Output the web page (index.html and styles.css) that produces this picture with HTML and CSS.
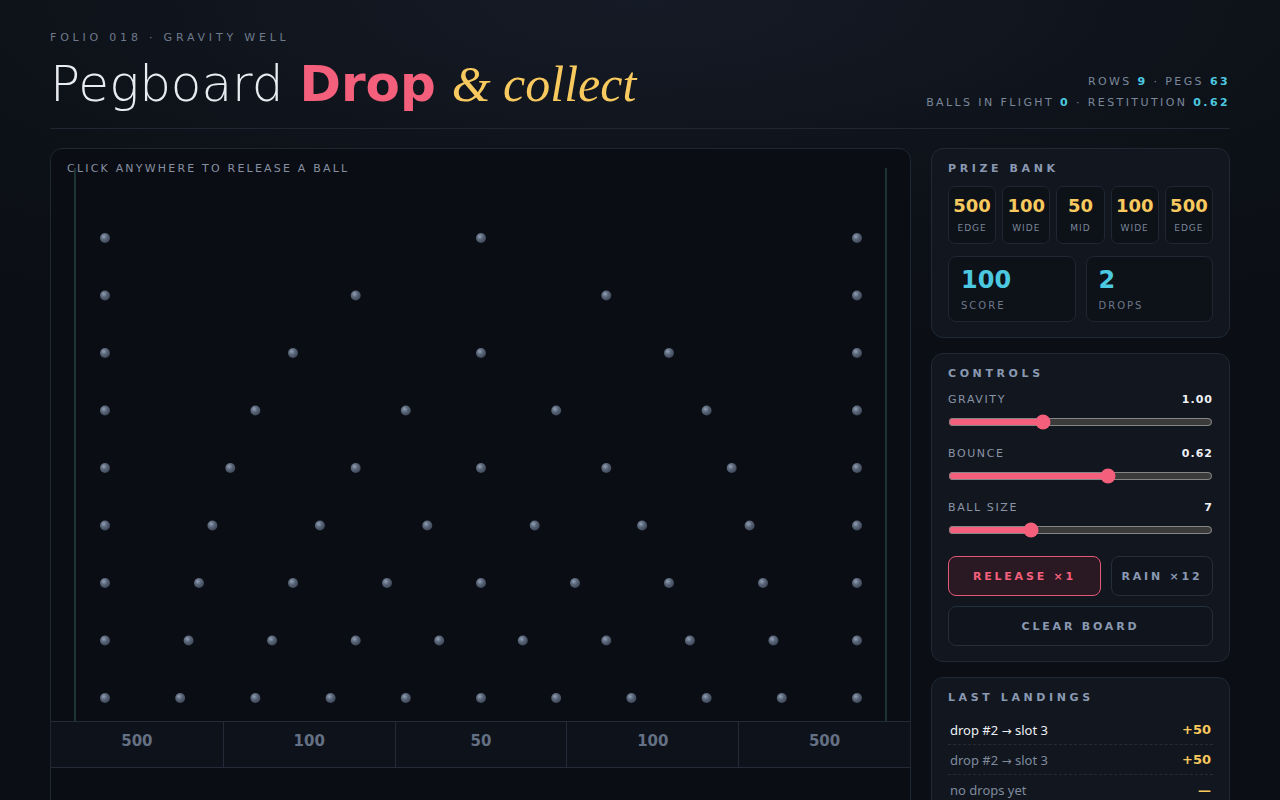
FILE: index.html
```html
<!DOCTYPE html>
<html lang="en">
<head>
<meta charset="utf-8">
<title>Pegboard Drop</title>
<link rel="stylesheet" href="styles.css">
</head>
<body>
<header class="top">
  <div class="brand">
    <div class="eyebrow">FOLIO 018 · GRAVITY WELL</div>
    <h1 class="title"><span class="t-light">Pegboard</span> <span class="t-bold">Drop</span> <span class="t-serif">&amp; collect</span></h1>
  </div>
  <div class="meta">
    <div>ROWS <b>9</b> · PEGS <b>63</b></div>
    <div>BALLS IN FLIGHT <b>0</b> · RESTITUTION <b>0.62</b></div>
  </div>
</header>

<main class="layout">
  <section class="board">
    <div class="hint">CLICK ANYWHERE TO RELEASE A BALL</div>
    <svg class="field" id="field" viewBox="0 0 859 572" preserveAspectRatio="xMinYMin meet">
      <defs>
        <radialGradient id="peg" cx="38%" cy="35%" r="70%">
          <stop offset="0" stop-color="#93a1b6"/>
          <stop offset="0.45" stop-color="#5a6679"/>
          <stop offset="1" stop-color="#3a4455"/>
        </radialGradient>
      </defs>
      <line x1="24" y1="19" x2="24" y2="572" stroke="#1c3436" stroke-width="2"/>
      <line x1="835" y1="19" x2="835" y2="572" stroke="#1c3436" stroke-width="2"/>
      <g id="pegs"></g>
    </svg>
    <div class="slots">
      <div class="slot">500</div>
      <div class="slot">100</div>
      <div class="slot">50</div>
      <div class="slot">100</div>
      <div class="slot">500</div>
    </div>
    <div class="tray"></div>
  </section>

  <aside class="side">
    <div class="card">
      <div class="card-title">PRIZE BANK</div>
      <div class="chips">
        <div class="chip"><div class="chip-val">500</div><div class="chip-lbl">EDGE</div></div>
        <div class="chip"><div class="chip-val">100</div><div class="chip-lbl">WIDE</div></div>
        <div class="chip"><div class="chip-val">50</div><div class="chip-lbl">MID</div></div>
        <div class="chip"><div class="chip-val">100</div><div class="chip-lbl">WIDE</div></div>
        <div class="chip"><div class="chip-val">500</div><div class="chip-lbl">EDGE</div></div>
      </div>
      <div class="stats">
        <div class="stat"><div class="stat-val">100</div><div class="stat-lbl">SCORE</div></div>
        <div class="stat"><div class="stat-val">2</div><div class="stat-lbl">DROPS</div></div>
      </div>
    </div>

    <div class="card">
      <div class="card-title">CONTROLS</div>
      <div class="ctrl ctrl-first">
        <div class="ctrl-row"><span class="ctrl-lbl">GRAVITY</span><span class="ctrl-val">1.00</span></div>
        <input class="range" type="range" min="0.2" max="2.5" step="0.01" value="1.00">
      </div>
      <div class="ctrl">
        <div class="ctrl-row"><span class="ctrl-lbl">BOUNCE</span><span class="ctrl-val">0.62</span></div>
        <input class="range" type="range" min="0.1" max="0.95" step="0.01" value="0.62">
      </div>
      <div class="ctrl">
        <div class="ctrl-row"><span class="ctrl-lbl">BALL SIZE</span><span class="ctrl-val">7</span></div>
        <input class="range" type="range" min="4" max="14" step="1" value="7">
      </div>
      <div class="btn-row">
        <button class="btn btn-primary">RELEASE ×1</button>
        <button class="btn">RAIN ×12</button>
      </div>
      <button class="btn btn-wide">CLEAR BOARD</button>
    </div>

    <div class="card">
      <div class="card-title">LAST LANDINGS</div>
      <ul class="log">
        <li class="log-row log-new"><span>drop #2 <span class="arrow">→</span> slot 3</span><b>+50</b></li>
        <li class="log-row"><span>drop #2 <span class="arrow">→</span> slot 3</span><b>+50</b></li>
        <li class="log-row"><span>no drops yet</span><b>—</b></li>
      </ul>
    </div>
  </aside>
</main>
<script>
(function(){
  var g = document.getElementById('pegs');
  var ns = 'http://www.w3.org/2000/svg';
  var cx = 430, half = 376, y0 = 89, dy = 57.5;
  for (var r = 0; r < 9; r++) {
    var n = r + 3;
    var step = (half * 2) / (n - 1);
    for (var i = 0; i < n; i++) {
      var c = document.createElementNS(ns, 'circle');
      c.setAttribute('cx', (cx - half + i * step).toFixed(1));
      c.setAttribute('cy', (y0 + r * dy).toFixed(1));
      c.setAttribute('r', '5');
      c.setAttribute('fill', 'url(#peg)');
      g.appendChild(c);
    }
  }
})();
</script>
</body>
</html>
```

FILE: styles.css
```css
* { box-sizing: border-box; }

html, body { margin: 0; }

body {
  min-height: 100vh;
  padding: 30px 50px 40px;
  background: radial-gradient(ellipse 90% 40% at 50% 0%, #151b26 0%, #0d1118 60%, #0b0e14 100%) #0b0e14;
  color: #e6e9ef;
  font-family: "DejaVu Sans", sans-serif;
}

.top {
  display: flex;
  justify-content: space-between;
  align-items: flex-end;
  padding-bottom: 15px;
  border-bottom: 1px solid #1f2733;
}

.eyebrow {
  font-size: 11px;
  line-height: 14px;
  letter-spacing: 3.8px;
  color: #6f7a8c;
  margin-top: 1px;
}

.title {
  margin: 11px 0 0;
  font-size: 50px;
  line-height: 57px;
  font-weight: normal;
  white-space: nowrap;
}

.t-light {
  font-weight: 200;
  color: #e8ebf0;
}

.t-bold {
  font-weight: bold;
  color: #f4607c;
}

.t-serif {
  font-family: "Liberation Serif", serif;
  font-style: italic;
  color: #f8c95e;
  font-size: 50px;
}

.meta {
  text-align: right;
  font-size: 11px;
  line-height: 21px;
  letter-spacing: 2.4px;
  color: #7b879a;
}

.meta b {
  color: #4cc9e0;
}

.layout {
  display: grid;
  grid-template-columns: 861px 1fr;
  gap: 20px;
  margin-top: 19px;
  align-items: start;
}

/* board */
.board {
  position: relative;
  background: #0a0d13;
  border: 1px solid #1f2733;
  border-radius: 12px;
  overflow: hidden;
  display: flex;
  flex-direction: column;
}

.hint {
  position: absolute;
  left: 16px;
  top: 13px;
  font-size: 11px;
  line-height: 14px;
  letter-spacing: 2.2px;
  color: #8690a2;
}

.field {
  display: block;
  width: 100%;
  height: 572px;
}

.slots {
  display: grid;
  grid-template-columns: repeat(5, 1fr);
  border-top: 1px solid #232b38;
  border-bottom: 1px solid #232b38;
  background: #0e121a;
}

.slot {
  height: 45px;
  padding-top: 9px;
  line-height: 20px;
  text-align: center;
  font-size: 15px;
  font-weight: bold;
  color: #647083;
  border-left: 1px solid #232b38;
}

.slot:first-child { border-left: none; }

.tray {
  height: 120px;
}

/* side */
.side {
  display: flex;
  flex-direction: column;
  gap: 15px;
}

.card {
  background: #11161f;
  border: 1px solid #212935;
  border-radius: 12px;
  padding: 14px 16px 15px;
}

.card-title {
  font-size: 11px;
  line-height: 12px;
  font-weight: bold;
  letter-spacing: 3.6px;
  color: #8a99b2;
}

.chips {
  display: grid;
  grid-template-columns: repeat(5, 1fr);
  gap: 6px;
  margin-top: 11px;
}

.chip {
  background: #0d1118;
  border: 1px solid #1f2733;
  border-radius: 7px;
  padding: 8px 0 9px;
  text-align: center;
}

.chip-val {
  font-size: 18px;
  line-height: 22px;
  font-weight: bold;
  color: #f8c95e;
}

.chip-lbl {
  margin-top: 5px;
  font-size: 9px;
  line-height: 12px;
  letter-spacing: 1px;
  color: #7b879a;
}

.stats {
  display: grid;
  grid-template-columns: 1fr 1fr;
  gap: 10px;
  margin-top: 12px;
}

.stat {
  background: #0d1118;
  border: 1px solid #1f2733;
  border-radius: 8px;
  padding: 9px 12px 9px;
}

.stat-val {
  font-size: 24px;
  line-height: 28px;
  font-weight: bold;
  color: #4cc9e0;
}

.stat-lbl {
  margin-top: 6px;
  font-size: 10px;
  line-height: 12px;
  letter-spacing: 2px;
  color: #6d788a;
}

.ctrl {
  margin-top: 16px;
}

.ctrl-first {
  margin-top: 12px;
}

.ctrl-row {
  display: flex;
  justify-content: space-between;
  align-items: center;
  height: 14px;
  font-size: 11px;
}

.ctrl-lbl {
  letter-spacing: 1.6px;
  color: #8a94a6;
}

.ctrl-val {
  font-weight: bold;
  letter-spacing: 1px;
  color: #eef0f4;
}

.range {
  display: block;
  width: 100%;
  height: 16px;
  margin: 8px 0 0;
  accent-color: #f4607c;
  color-scheme: dark;
}

.btn-row {
  display: grid;
  grid-template-columns: 1.5fr 1fr;
  gap: 10px;
  margin-top: 18px;
}

.btn {
  height: 40px;
  border-radius: 8px;
  border: 1px solid #252e3b;
  background: #10151d;
  color: #8a99b2;
  font-family: "DejaVu Sans", sans-serif;
  font-size: 11px;
  font-weight: bold;
  letter-spacing: 2.8px;
  padding: 0;
  cursor: pointer;
}

.btn-primary {
  background: #2a1823;
  border-color: #e35a76;
  color: #f4607c;
}

.btn-wide {
  display: block;
  width: 100%;
  margin-top: 10px;
}

.log {
  list-style: none;
  margin: 11px 0 0;
  padding: 0;
}

.log-row {
  display: flex;
  justify-content: space-between;
  align-items: center;
  height: 30px;
  padding: 0 2px;
  border-bottom: 1px dashed #232c39;
  font-family: "Noto Sans", sans-serif;
  font-size: 13px;
  color: #7f8b9d;
}

.log-row:last-child { border-bottom: none; }

.log-new { color: #eef0f4; }

.arrow {
  font-family: "DejaVu Sans", sans-serif;
  font-size: 12px;
}

.log-row b {
  font-family: "DejaVu Sans", sans-serif;
  font-size: 13px;
  color: #f8c95e;
}
```
